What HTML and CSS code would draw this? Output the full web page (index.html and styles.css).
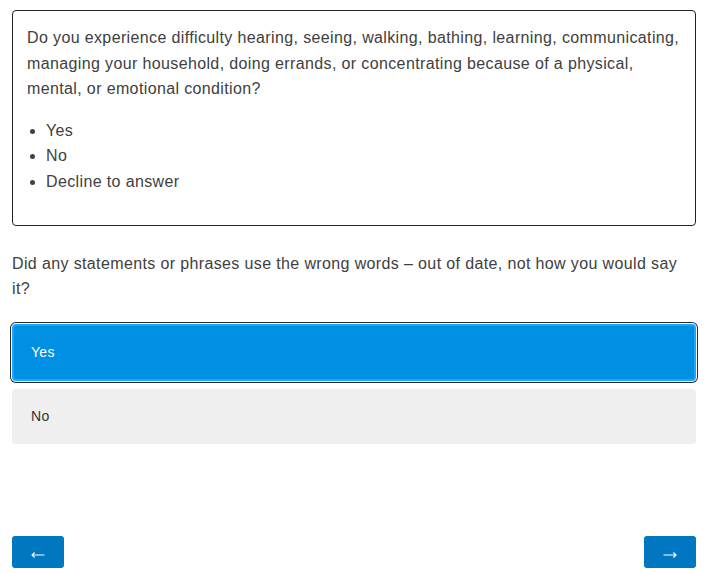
FILE: index.html
```html
<!DOCTYPE html>
<html lang="en">
<head>
  <meta charset="UTF-8">
  <title>Survey question</title>
  <link rel="stylesheet" href="styles.css">
</head>
<body>
  <div class="page">
    <div class="prompt-card">
      <p>Do you experience difficulty hearing, seeing, walking, bathing, learning, communicating, managing your household, doing errands, or concentrating because of a physical, mental, or emotional condition?</p>
      <ul>
        <li>Yes</li>
        <li>No</li>
        <li>Decline to answer</li>
      </ul>
    </div>

    <p class="question">Did any statements or phrases use the wrong words – out of date, not how you would say it?</p>

    <div class="choices">
      <button class="choice selected">Yes</button>
      <button class="choice">No</button>
    </div>

    <div class="nav">
      <button class="nav-btn" aria-label="Back">
        <svg width="14" height="8" viewBox="0 0 14 8"><path d="M13.5 4H1.2M3.6 1.5L1 4l2.6 2.5" fill="none" stroke="#fff" stroke-width="1.1"/></svg>
      </button>
      <button class="nav-btn" aria-label="Next">
        <svg width="14" height="8" viewBox="0 0 14 8"><path d="M0.5 4h12.3M10.4 1.5L13 4l-2.6 2.5" fill="none" stroke="#fff" stroke-width="1.1"/></svg>
      </button>
    </div>
  </div>
</body>
</html>
```

FILE: styles.css
```css
html, body {
  height: 100%;
}

body {
  margin: 0;
  font-family: "Liberation Sans", Arial, sans-serif;
  font-size: 16px;
  letter-spacing: 0.37px;
  color: #404040;
  background: #fff;
}

.page {
  box-sizing: border-box;
  min-height: 100%;
  padding: 10px 12px 5px;
  display: flex;
  flex-direction: column;
}

.prompt-card {
  border: 1px solid #222;
  border-radius: 4px;
  padding: 14px;
  line-height: 1.6;
}

.prompt-card p {
  margin: 0 0 16px;
}

.prompt-card ul {
  margin: 16px 0;
  padding-left: 19px;
}

.question {
  margin: 25px 0 22px;
  line-height: 1.6;
}

.choices {
  display: flex;
  flex-direction: column;
  gap: 8px;
}

.choice {
  font-family: inherit;
  font-size: 14px;
  letter-spacing: 0.3px;
  text-align: left;
  color: #333;
  background: #efefef;
  border: none;
  border-radius: 4px;
  height: 55px;
  padding: 0 19px;
  cursor: pointer;
}

.choice.selected {
  color: #fff;
  background: #0090e3;
  border: 2px solid #1aa6ff;
  padding: 0 17px;
  height: 57px;
  box-shadow: 0 0 0 1px #fff, 0 0 0 2px #2a2a2a;
}

.nav {
  margin-top: auto;
  display: flex;
  justify-content: space-between;
}

.nav-btn {
  width: 52px;
  height: 32px;
  border: none;
  border-radius: 3px;
  background: #0077c0;
  display: flex;
  align-items: center;
  justify-content: center;
  padding: 5px 0 0;
  cursor: pointer;
}

.nav-btn svg {
  display: block;
}
```
